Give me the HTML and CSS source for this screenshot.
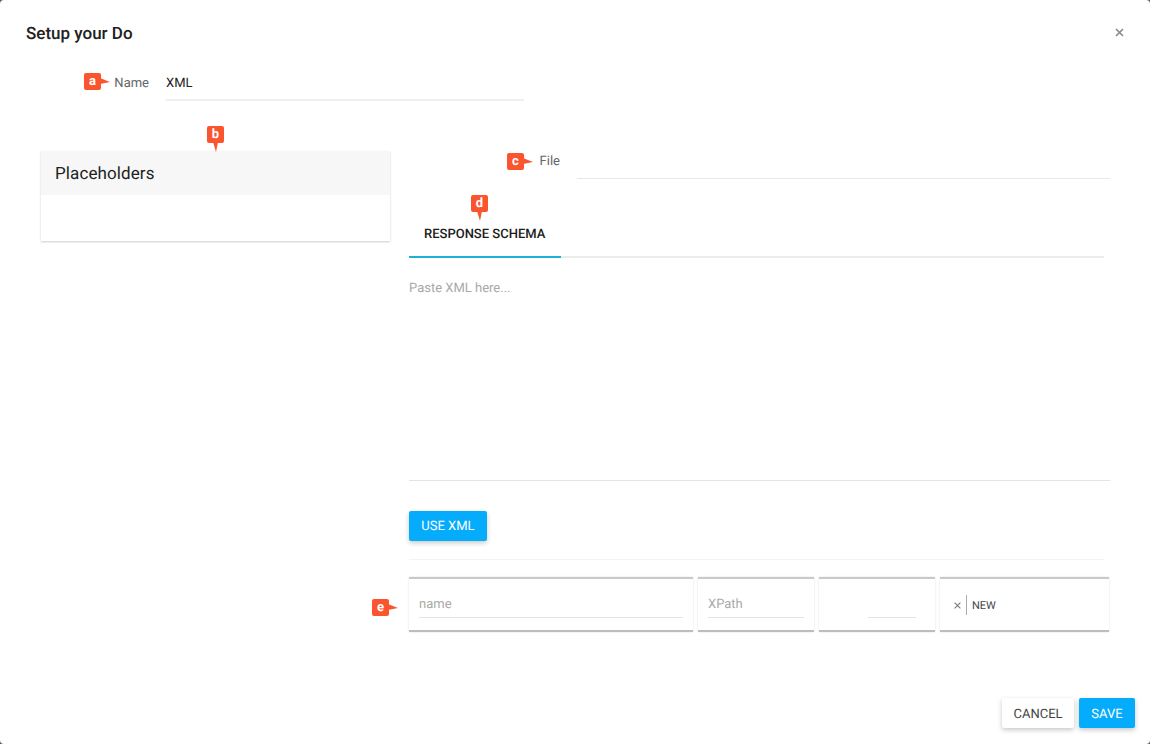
FILE: index.html
```html
<!DOCTYPE html>
<html lang="en">
<head>
<meta charset="utf-8">
<title>Setup your Do</title>
<link rel="stylesheet" href="styles.css">
</head>
<body>
<main class="dialog">
  <header class="dialog-head">
    <h1 class="dialog-title">Setup your Do</h1>
    <svg class="close" width="9" height="9" viewBox="0 0 9 9" aria-label="Close"><path d="M1 1l7 7M8 1L1 8"/></svg>
  </header>

  <div class="field name-field">
    <label class="field-label name-label"><span class="badge badge-side badge-a">a</span>Name</label>
    <div class="field-input name-input">XML</div>
  </div>

  <div class="columns">
    <aside class="panel">
      <span class="badge badge-down badge-b">b</span>
      <div class="panel-head">Placeholders</div>
      <div class="panel-body"></div>
    </aside>

    <section class="main">
      <div class="field file-field">
        <label class="field-label file-label"><span class="badge badge-side badge-c">c</span>File</label>
        <div class="field-input file-input"></div>
      </div>

      <div class="tabs">
        <div class="tab"><span class="badge badge-down badge-d">d</span>RESPONSE SCHEMA</div>
      </div>

      <div class="xml-area">Paste XML here...</div>

      <button class="btn btn-primary use-xml" type="button">USE XML</button>
      <hr class="divider">

      <div class="row">
        <span class="badge badge-side badge-e">e</span>
        <div class="cell cell-name"><div class="cell-input">name</div></div>
        <div class="cell cell-xpath"><div class="cell-input">XPath</div></div>
        <div class="cell cell-blank"><div class="cell-input cell-input-short"></div></div>
        <div class="cell cell-actions">
          <svg class="row-x" width="7" height="7" viewBox="0 0 7 7"><path d="M.6.6l5.800 5.800M6.400.6L.6 6.400"/></svg>
          <span class="row-sep"></span>
          <span class="row-new">NEW</span>
        </div>
      </div>
    </section>
  </div>

  <footer class="dialog-foot">
    <button class="btn btn-default btn-cancel" type="button">CANCEL</button>
    <button class="btn btn-primary btn-save" type="button">SAVE</button>
  </footer>
</main>
</body>
</html>
```

FILE: styles.css
```css
* { box-sizing: border-box; }
html, body { margin: 0; height: 100%; }
body {
  background: #555;
  font-family: Roboto, "Liberation Sans", sans-serif;
  color: #212121;
  overflow: hidden;
  text-rendering: geometricPrecision;
}
.dialog {
  width: 1150px;
  height: 744px;
  background: #fff;
  border-radius: 4px;
  display: flex;
  flex-direction: column;
  position: relative;
}
.dialog-head {
  height: 66px;
  display: flex;
  justify-content: space-between;
  align-items: flex-start;
  padding: 25px 26px 0;
}
.dialog-title {
  margin: 0;
  font-size: 17px;
  line-height: 19px;
  font-weight: 500;
  color: #212121;
}
.close {
  margin: 3px 0 0;
  fill: none;
  stroke: #8a8a8a;
  stroke-width: 1.7;
}
.field { display: flex; }
.field-label {
  position: relative;
  padding-top: 1px;
  font-size: 13px;
  line-height: 34px;
  color: #666;
  text-align: right;
}
.field-input {
  height: 34px;
  padding-top: 1px;
  border-bottom: 1px solid #e8e8e8;
  font-size: 13px;
  line-height: 34px;
  color: #222;
}
.name-field { height: 35px; }
.name-label { width: 149px; margin-right: 17px; }
.name-input { width: 358px; height: 35px; border-bottom: 2px solid #f0f0f0; }

.columns {
  display: flex;
  align-items: flex-start;
  margin: 50px 0 0 41px;
}
.panel {
  position: relative;
  width: 349px;
  margin-right: 19px;
  background: #fff;
  box-shadow: 0 1px 2px rgba(0, 0, 0, .2);
}
.panel-head {
  height: 44px;
  padding: 1px 0 0 14px;
  background: #f7f7f7;
  font-size: 17px;
  line-height: 44px;
  letter-spacing: .1px;
  color: #212121;
}
.panel-body { height: 46px; }

.main { width: 701px; }
.file-field { height: 28px; }
.file-label { width: 151px; margin-right: 17px; line-height: 19px; }
.file-input { width: 533px; height: 28px; }

.tabs {
  width: 695px;
  height: 79px;
  border-bottom: 2px solid #ececec;
}
.tab {
  position: relative;
  width: 152px;
  height: 79px;
  padding: 48px 0 0 15px;
  border-bottom: 2px solid #1eb1d6;
  font-size: 13px;
  line-height: 16px;
  font-weight: 500;
  color: #1c1c1c;
  white-space: nowrap;
}
.xml-area {
  width: 701px;
  height: 223px;
  padding-top: 23px;
  border-bottom: 1px solid #e4e4e4;
  font-size: 13px;
  line-height: 16px;
  color: #a9a9a9;
}
.btn {
  display: block;
  height: 30px;
  padding: 2px 0 0;
  border: 0;
  border-radius: 2px;
  font-family: inherit;
  font-size: 13px;
  line-height: 16px;
  text-rendering: geometricPrecision;
  box-shadow: 0 2px 5px rgba(0, 0, 0, .22);
}
.btn-primary { background: #04acfb; color: #fff; }
.btn-default { background: #fff; color: #444; }
.btn-cancel { width: 72px; padding-top: 4px; }
.btn-save { width: 56px; padding-top: 4px; }
.use-xml { margin-top: 30px; width: 78px; }
.divider {
  width: 695px;
  height: 1px;
  margin: 18px 0 17px;
  border: 0;
  background: #f3f3f3;
}
.row {
  position: relative;
  display: flex;
  gap: 5px;
  height: 55px;
}
.cell {
  height: 55px;
  padding: 0 10px;
  border-top: 2px solid #c9c9c9;
  border-bottom: 2px solid #bdbdbd;
  background: #fff;
  box-shadow: 0 0 2px rgba(0, 0, 0, .12);
}
.cell-name { width: 284px; }
.cell-xpath { width: 116px; }
.cell-blank { width: 116px; display: flex; justify-content: flex-end; padding-right: 19px; }
.cell-actions { width: 169px; display: flex; align-items: center; padding: 1px 0 0 14px; }
.cell-input {
  height: 39px;
  padding-top: 18px;
  border-bottom: 1px solid #e4e4e4;
  font-size: 13px;
  line-height: 16px;
  color: #aaa;
}
.cell-input-short { width: 48px; }
.row-x { fill: none; stroke: #777; stroke-width: 1.1; }
.row-sep { width: 1px; height: 20px; margin: 0 5px; background: #aaa; }
.row-new { font-size: 11px; font-weight: 400; color: #444; }

.dialog-foot {
  display: flex;
  justify-content: flex-end;
  gap: 5px;
  margin-top: auto;
  padding: 0 15px 16px;
}

.badge {
  position: absolute;
  z-index: 2;
  width: 17px;
  height: 17px;
  border-radius: 2px;
  background: #fb5530;
  color: #fff;
  font-size: 13px;
  font-weight: 700;
  line-height: 18px;
  text-align: center;
}
.badge::after { content: ""; position: absolute; }
.badge-side::after {
  top: 5px;
  left: 16px;
  border-style: solid;
  border-width: 4px 0 2px 10px;
  border-color: transparent transparent transparent #fb5530;
}
.badge-down::after {
  top: 16px;
  left: 6px;
  border-style: solid;
  border-width: 10px 2px 0 3px;
  border-color: #fb5530 transparent transparent transparent;
}
.badge-a { left: 84px; top: 7px; }
.badge-b { left: 166px; top: -25px; }
.badge-c { left: 98px; top: 2px; }
.badge-d { left: 62px; top: 16px; }
.badge-e { left: -37px; top: 22px; }
```
